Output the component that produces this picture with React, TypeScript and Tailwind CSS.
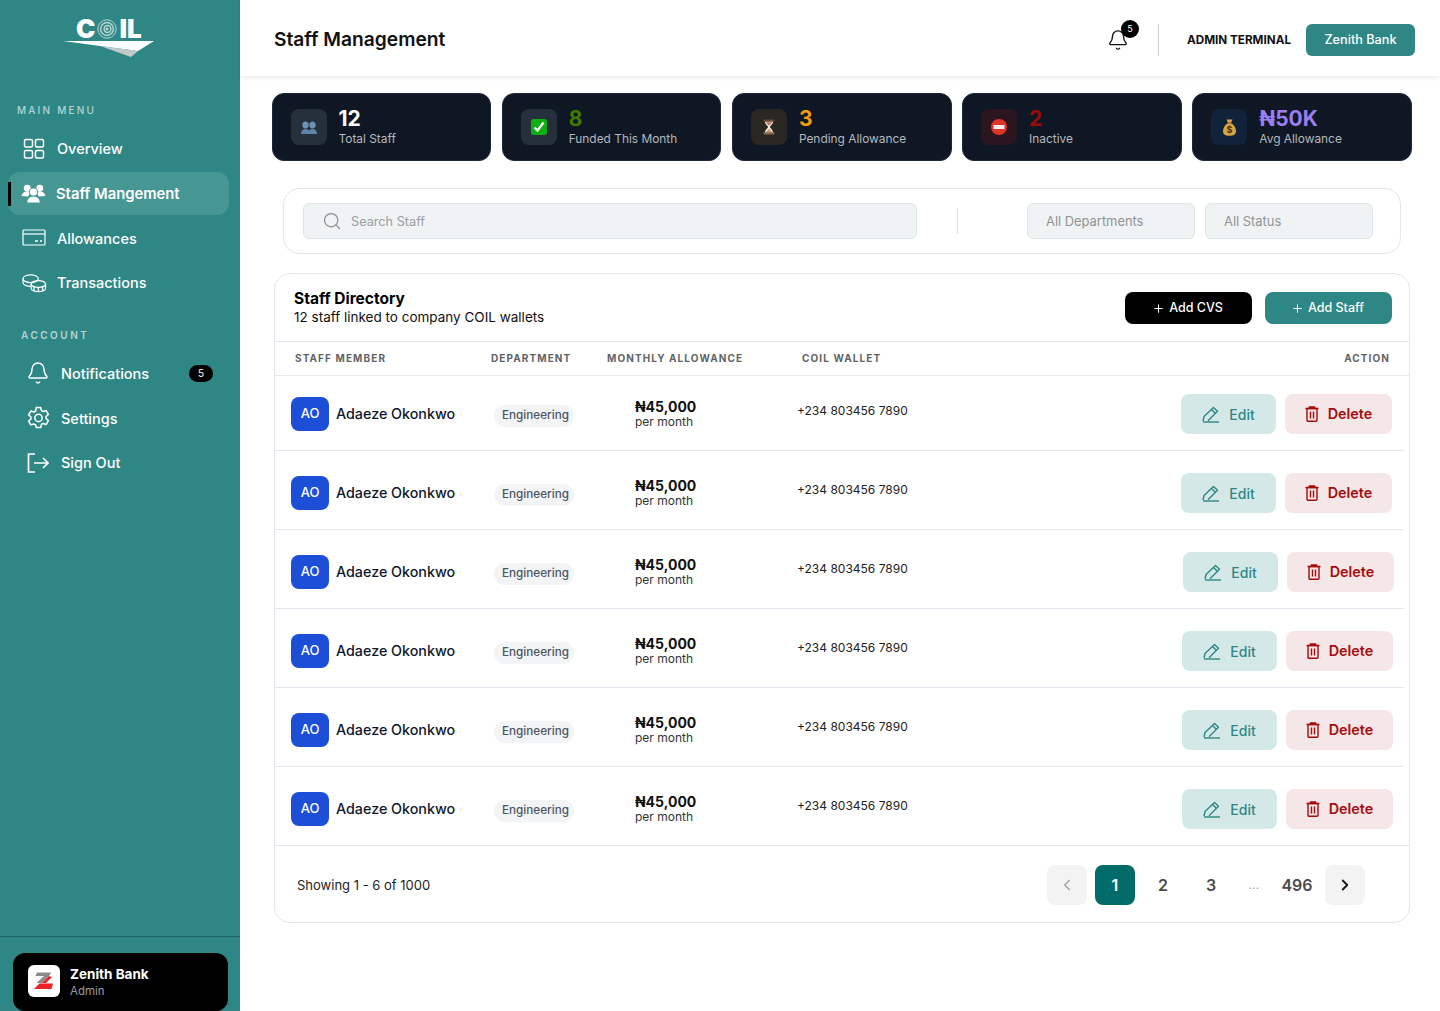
import React from "react";
import { Bell, ChevronLeft, ChevronRight, Plus, Search } from "lucide-react";

const font = { fontFamily: "Inter, 'Liberation Sans', sans-serif" };

const GridIcon = () => (
  <svg width="22" height="22" viewBox="0 0 22 22" fill="none" stroke="white" strokeWidth="1.5">
    <rect x="1.5" y="1.5" width="8" height="7.5" rx="1.5" />
    <rect x="12.5" y="1.5" width="8" height="7.5" rx="1.5" />
    <rect x="1.5" y="12.5" width="8" height="7.5" rx="1.5" />
    <rect x="12.5" y="12.5" width="8" height="7.5" rx="1.5" />
  </svg>
);

const PeopleIcon = () => (
  <svg width="25" height="20" viewBox="0 0 26 20" fill="white">
    <circle cx="6.5" cy="5" r="3.6" />
    <circle cx="19.5" cy="5" r="3.6" />
    <path d="M0.5 13c1-3.5 3-4.5 6-4.500 1.600 0 3 .4 4 1.300-1.600 1-2.600 2.200-3 3.900z" />
    <path d="M25.500 13c-1-3.500-3-4.500-6-4.500-1.600 0-3 .4-4 1.300 1.600 1 2.600 2.200 3 3.900z" />
    <circle cx="13" cy="9" r="4.200" stroke="#469693" strokeWidth="1" />
    <path d="M6.500 20c.4-4.400 2.800-6 6.500-6s6.100 1.600 6.500 6z" />
  </svg>
);

const CardIcon = () => (
  <svg width="24" height="17" viewBox="0 0 24 17" fill="none" stroke="white" strokeWidth="1.2">
    <rect x="1" y="1" width="22" height="15" rx="1" />
    <path d="M1 5h22" />
    <path d="M13 12h3M18 12h2" strokeWidth="1.4" />
  </svg>
);

const CoinsIcon = () => (
  <svg width="25" height="20" viewBox="0 0 26 20" fill="none" stroke="white" strokeWidth="1.3">
    <ellipse cx="9" cy="5.500" rx="8" ry="4" />
    <path d="M1 5.500v4c0 2.200 3.500 4 8 4" />
    <ellipse cx="17" cy="11" rx="7.500" ry="3.500" />
    <path d="M9.500 11v4.500c0 2 3.400 3.500 7.500 3.500s7.500-1.500 7.500-3.500V11M17 14.500V19M12.500 14v4.500M21.500 14v4.500" />
  </svg>
);

const GearIcon = () => (
  <svg width="23" height="23" viewBox="0 0 24 24" fill="none" stroke="white" strokeWidth="1.6" strokeLinejoin="round">
    <path d="M9.700 1.500h4.600l.7 3.200 1.900 1.100 3.100-1 2.300 4-2.400 2.200v2l2.400 2.200-2.300 4-3.100-1-1.900 1.100-.7 3.200H9.700L9 19.800l-1.900-1.100-3.100 1-2.300-4 2.400-2.200v-2L1.700 9.300l2.300-4 3.100 1L9 5.200z" />
    <circle cx="12" cy="12.500" r="3.800" />
  </svg>
);

const SignOutIcon = () => (
  <svg width="22" height="20" viewBox="0 0 22 20" fill="none" stroke="white" strokeWidth="1.7">
    <path d="M8 1H1.500v18H8" />
    <path d="M7 10h14M16 5l5 5-5 5" />
  </svg>
);

const PencilIcon = () => (
  <svg width="18" height="17" viewBox="0 0 18 17" fill="none" stroke="#2e8785" strokeWidth="1.400" strokeLinejoin="round">
    <path d="M1 15l1-4.500L11.500 1.500l4 3.800L6 14.800" />
    <path d="M1 16h16" />
    <path d="M9.500 3.500l4 4" />
  </svg>
);

const TrashIcon = () => (
  <svg width="14" height="16" viewBox="0 0 14 16" fill="none" stroke="#a50c0c" strokeWidth="1.400">
    <path d="M0.500 2.500h13M4.500 2.500V1h5v1.500" />
    <rect x="2" y="2.500" width="10" height="12.700" rx="1" />
    <path d="M5.500 5.500v7M8.500 5.500v7" />
  </svg>
);

const BustsIcon = () => (
  <svg width="16" height="13" viewBox="0 0 16 13" fill="#6e8fb5">
    <path d="M4.500 0.500c2 0 3.200 1.500 3.200 3.500S6.500 7.500 4.500 7.500 1.300 6 1.300 4 2.500 0.500 4.500 0.500z" />
    <path d="M11.500 0.500c2 0 3.200 1.500 3.200 3.500s-1.200 3.500-3.200 3.500S8.300 6 8.300 4s1.200-3.500 3.200-3.500z" />
    <path d="M0 13c0-3 1.500-5 4.500-5 1.500 0 2.700.5 3.500 1.500.8-1 2-1.500 3.500-1.500 3 0 4.500 2 4.500 5z" fill="#5f82ab" />
  </svg>
);

const CheckEmoji = () => (
  <svg width="16" height="16" viewBox="0 0 16 16">
    <rect width="16" height="16" rx="2.500" fill="#0cb012" />
    <path d="M3.500 8.500l3 3 6-8" fill="none" stroke="white" strokeWidth="2.200" />
  </svg>
);

const HourglassEmoji = () => (
  <svg width="12" height="16" viewBox="0 0 12 16">
    <rect x="0.500" y="0.500" width="11" height="2.200" rx="0.800" fill="#6b4a35" />
    <rect x="0.500" y="13.300" width="11" height="2.200" rx="0.800" fill="#8a6a50" />
    <path d="M2 2.700h8c0 3-3 3.800-3 5.300s3 2.300 3 5.300H2c0-3 3-3.800 3-5.300S2 5.700 2 2.700z" fill="#efeae4" />
    <path d="M3 3.200h6c-.4 1.400-2 2-3 3.200-1-1.200-2.600-1.800-3-3.200z" fill="#b9735a" />
    <path d="M3.200 13c.8-1.700 2-2.200 2.800-3.300.800 1.100 2 1.600 2.800 3.300z" fill="#c99a6b" />
  </svg>
);

const NoEntryEmoji = () => (
  <svg width="16" height="16" viewBox="0 0 16 16">
    <circle cx="8" cy="8" r="8" fill="#e0342b" />
    <rect x="2.500" y="6" width="11" height="4" fill="#f3ecec" />
  </svg>
);

const MoneyBagEmoji = () => (
  <svg width="13" height="17" viewBox="0 0 13 17">
    <path d="M3.500 0.500h6L8 4c3 1.500 5 5 5 8 0 3.500-2.500 4.800-6.500 4.800S0 15.500 0 12c0-3 2-6.500 5-8z" fill="#d9a441" />
    <path d="M4.500 4h4" stroke="#7a5520" strokeWidth="1" />
    <text x="6.500" y="14" textAnchor="middle" fontSize="9" fontWeight="700" fill="#4a3210">$</text>
  </svg>
);

const ZenithLogo = () => (
  <svg width="20" height="18" viewBox="0 0 20 18">
    <path d="M3 0.500h14l-1.500 3L8 11H2.500L10 4H1.500z" fill="#8b8b8b" />
    <path d="M9 11.500h10l-1.500 5.500H0l5.500-5.500z" fill="#ed2024" />
    <path d="M15 4l-7 7h4l6-6z" fill="#ed2024" />
  </svg>
);

const Logo = () => (
  <div className="relative h-[76px] w-full">
    <div className="absolute left-[76px] top-[15px] flex items-center">
      <span className="text-[26px] font-black leading-[28px] text-white">C</span>
      <svg width="20" height="22" viewBox="0 0 20 22" fill="none" stroke="#b9d6d5" strokeWidth="1.500" className="mx-[2px]">
        <circle cx="10" cy="11" r="9.200" strokeWidth="1" />
        <circle cx="10" cy="11" r="6.400" />
        <circle cx="10.500" cy="11" r="3.400" />
        <circle cx="10" cy="11" r="0.800" />
      </svg>
      <span className="text-[26px] font-black leading-[28px] text-white">IL</span>
    </div>
    <svg width="92" height="18" viewBox="0 0 92 18" className="absolute left-[63px] top-[40px]">
      <path d="M0 1h91L75 11 37 6z" fill="white" />
      <path d="M37 6l38 5-7 6z" fill="#c3c9cb" />
    </svg>
  </div>
);

type NavItemProps = {
  icon: React.ReactNode;
  label: string;
  active?: boolean;
  badge?: string;
};

const NavItem = ({ icon, label, active, badge }: NavItemProps) => (
  <div className={`relative mb-[1.700px] flex h-[43px] items-center rounded-xl ${active ? "bg-[#469693]" : ""}`}>
    {active && <div className="absolute left-0 top-[10px] h-[24px] w-[3px] bg-black" />}
    <div className={`flex shrink-0 justify-center pl-[3px] ${active ? "w-[48px]" : "w-[49px]"}`}>{icon}</div>
    <span className={`pt-[1px] text-white ${active ? "text-[14.800px] font-semibold" : "text-[14.500px] font-medium"}`}>{label}</span>
    {badge && (
      <span className="ml-auto mr-[16px] flex h-[17px] w-[24px] items-center justify-center rounded-full bg-black text-[10px] text-white">
        {badge}
      </span>
    )}
  </div>
);

const Sidebar = () => (
  <aside className="flex h-full w-[240px] shrink-0 flex-col bg-[#2e8785]">
    <Logo />
    <div className="mt-[28px] pl-[17px] text-[10px] font-medium leading-[12px] tracking-[0.22em] text-[#b5d4d3]">MAIN MENU</div>
    <nav className="mt-[11px] pl-[8px] pr-[11px]">
      <NavItem icon={<GridIcon />} label="Overview" />
      <NavItem icon={<PeopleIcon />} label="Staff Mangement" active />
      <NavItem icon={<CardIcon />} label="Allowances" />
      <NavItem icon={<CoinsIcon />} label="Transactions" />
    </nav>
    <div className="mt-[23px] pl-[21px] text-[10px] font-semibold leading-[12px] tracking-[0.25em] text-[#b5d4d3]">ACCOUNT</div>
    <nav className="mt-[11px] pl-[12px] pr-[11px]">
      <NavItem icon={<Bell size={24} color="white" strokeWidth={1.4} />} label="Notifications" badge="5" />
      <NavItem icon={<GearIcon />} label="Settings" />
      <NavItem icon={<SignOutIcon />} label="Sign Out" />
    </nav>
    <div className="mt-auto border-t border-[#1f5f5d] pl-[13px] pr-[12px] pt-[16px]">
      <div className="flex h-[58px] items-center gap-[10px] rounded-xl bg-black pl-[15px]">
        <div className="-mt-[2px] flex h-[32px] w-[32px] items-center justify-center rounded-md bg-white">
          <ZenithLogo />
        </div>
        <div>
          <div className="text-[13.500px] font-bold leading-[18px] text-white">Zenith Bank</div>
          <div className="mt-[1px] text-[11.500px] leading-[15px] text-[#9a9a9a]">Admin</div>
        </div>
      </div>
    </div>
  </aside>
);

const Header = () => (
  <header className="flex h-[76px] shrink-0 items-center bg-white pl-[34px] pr-[25px] pt-[4px] shadow-[0_2px_4px_rgba(0,0,0,0.08)]">
    <h1 className="-mt-[2px] text-[19.200px] font-semibold text-[#111]">Staff Management</h1>
    <div className="relative ml-auto">
      <Bell size={22} color="#111" strokeWidth={1.5} />
      <span className="absolute -right-[10px] -top-[9px] flex h-[18px] w-[18px] items-center justify-center rounded-full bg-black text-[9px] text-white">
        5
      </span>
    </div>
    <div className="ml-[29px] h-[32px] w-px bg-[#d4d4d4]" />
    <div className="ml-[28px] mt-[2px] text-[11.700px] font-bold text-[#111]">ADMIN TERMINAL</div>
    <div className="ml-[15px] flex h-[32px] w-[109px] items-center justify-center rounded-md bg-[#2e8785] text-[12.700px] font-medium text-white">
      Zenith Bank
    </div>
  </header>
);

type StatProps = {
  icon: React.ReactNode;
  iconBg: string;
  value: string;
  valueColor: string;
  label: string;
};

const StatCard = ({ icon, iconBg, value, valueColor, label }: StatProps) => (
  <div className="flex h-[68px] items-center rounded-xl border border-[#1e2a3a] bg-[#0f1724] pl-[18px]">
    <div className={`flex h-[36px] w-[36px] items-center justify-center rounded-lg ${iconBg}`}>{icon}</div>
    <div className="ml-[12px]">
      <div className={`text-[21px] font-bold leading-[24px] ${valueColor}`}>{value}</div>
      <div className="-mt-[1px] text-[11.900px] leading-[17px] text-[#b4b8bf]">{label}</div>
    </div>
  </div>
);

const Stats = () => (
  <div className="grid grid-cols-5 gap-[10.500px] pl-[31.500px] pr-[28px] pt-[17px]">
    <StatCard icon={<BustsIcon />} iconBg="bg-[#262f3c]" value="12" valueColor="text-white" label="Total Staff" />
    <StatCard icon={<CheckEmoji />} iconBg="bg-[#262f3c]" value="8" valueColor="text-[#3f7a00]" label="Funded This Month" />
    <StatCard icon={<HourglassEmoji />} iconBg="bg-[#2a2722]" value="3" valueColor="text-[#f59e0b]" label="Pending Allowance" />
    <StatCard icon={<NoEntryEmoji />} iconBg="bg-[#2d1520]" value="2" valueColor="text-[#9b0b0b]" label="Inactive" />
    <StatCard icon={<MoneyBagEmoji />} iconBg="bg-[#10233a]" value="₦50K" valueColor="text-[#9a7df0]" label="Avg Allowance" />
  </div>
);

const Filters = () => (
  <div className="ml-[43px] mr-[39px] mt-[27px] flex h-[66px] items-center rounded-2xl border border-[#dfe9e9] pl-[19px]">
    <div className="flex h-[36px] w-[614px] items-center rounded-md border border-[#dbe6e6] bg-[#eff3f4] pl-[18px]">
      <Search size={20} color="#8a8f93" strokeWidth={1.5} />
      <span className="ml-[9px] mt-[1px] text-[12.700px] text-[#9a9ea2]">Search Staff</span>
    </div>
    <div className="ml-[40px] h-[26px] w-px bg-[#dfe6e6]" />
    <div className="ml-[69px] flex h-[36px] w-[168px] items-center rounded-md border border-[#dbe6e6] bg-[#eff3f4] pl-[18px] pt-[1px] text-[12.900px] text-[#8f9497]">
      All Departments
    </div>
    <div className="ml-[10px] flex h-[36px] w-[168px] items-center rounded-md border border-[#dbe6e6] bg-[#eff3f4] pl-[18px] pt-[1px] text-[12.900px] text-[#8f9497]">
      All Status
    </div>
  </div>
);

// first row is shorter, the rest carry a little extra room on top, as in the design
const Row = ({ index }: { index: number }) => {
  const actionsMargin = ["mr-[12px]", "mr-[12px]", "mr-[10px]", "mr-[11px]", "mr-[11px]", "mr-[16px]"][index];
  return (
    <div
      className={`flex items-center border-b border-[#e2e6ef] pl-[16px] ${index === 0 ? "h-[75px] pt-[2px]" : "h-[79px] pt-[6px]"} ${index === 5 ? "" : "mr-[5px]"}`}
    >
      <div className="-mt-[1px] flex w-[203px] shrink-0 items-center">
        <div className="flex h-[34px] w-[38px] items-center justify-center rounded-lg bg-[#1d4ed8] text-[13px] font-medium text-white">AO</div>
        <span className="ml-[7px] text-[14.300px] font-medium text-[#0f172a]">Adaeze Okonkwo</span>
      </div>
      <div className="w-[141px] shrink-0">
        <span className="inline-flex h-[22px] w-[80px] items-center justify-center rounded-full bg-[#f3f4f6] pl-[3px] text-[11.700px] font-medium text-[#4b5563]">
          Engineering
        </span>
      </div>
      <div className="w-[162px] shrink-0">
        <div className="text-[14px] font-bold leading-[16px] text-[#111]">₦45,000</div>
        <div className="text-[12px] leading-[14px] text-[#333]">per month</div>
      </div>
      <div className="-mt-[6px] text-[12px] text-[#222]">+234 803456 7890</div>
      <div className={`ml-auto flex gap-[9px] ${actionsMargin}`}>
        <div className="flex h-[40px] w-[95px] items-center justify-center gap-[9px] rounded-lg bg-[#d5e8e8] text-[14px] font-medium text-[#2e8785]">
          <PencilIcon />
          Edit
        </div>
        <div className="flex h-[40px] w-[107px] items-center justify-center gap-[9px] rounded-lg bg-[#f5e6e7] text-[14.400px] font-semibold text-[#a50c0c]">
          <TrashIcon />
          Delete
        </div>
      </div>
    </div>
  );
};

const Directory = () => (
  <section className="ml-[34px] mr-[30px] mt-[19px] h-[650px] rounded-2xl border border-[#e2e6ef]">
    <div className="flex h-[67px] items-center pl-[19px] pr-[17px] pt-[1px]">
      <div>
        <h2 className="text-[15.500px] font-bold leading-[18px] text-black">Staff Directory</h2>
        <p className="text-[13.500px] leading-[18px] text-[#111]">12 staff linked to company COIL wallets</p>
      </div>
      <div className="ml-auto flex gap-[13px]">
        <div className="flex h-[32px] w-[127px] items-center justify-center gap-[4px] rounded-lg bg-black pr-[2px] text-[12.500px] font-medium text-white">
          <Plus size={13} />
          Add CVS
        </div>
        <div className="flex h-[32px] w-[127px] items-center justify-center gap-[4px] rounded-lg bg-[#2e8785] pr-[2px] text-[12.500px] font-medium text-white">
          <Plus size={13} />
          Add Staff
        </div>
      </div>
    </div>
    <div className="flex h-[35px] items-center border-y border-[#e6eaf0] pl-[20px] pr-[19px] text-[10px] font-bold tracking-[0.11em] text-[#5f6368]">
      <div className="w-[196px]">STAFF MEMBER</div>
      <div className="w-[116px]">DEPARTMENT</div>
      <div className="w-[195px]">MONTHLY ALLOWANCE</div>
      <div>COIL WALLET</div>
      <div className="ml-auto">ACTION</div>
    </div>
    {[0, 1, 2, 3, 4, 5].map((i) => (
      <Row key={i} index={i} />
    ))}
    <div className="flex h-[76px] items-center pl-[22px] pt-[2px]">
      <span className="mt-[1px] text-[13px] text-[#222]">Showing 1 - 6 of 1000</span>
      <div className="ml-auto mr-[44px] flex items-center text-[16px] font-semibold text-[#4b4b4f]">
        <div className="flex h-[40px] w-[40px] items-center justify-center rounded-lg bg-[#f4f3f4]">
          <ChevronLeft size={18} color="#a3a3a6" />
        </div>
        <div className="ml-[8px] flex h-[40px] w-[40px] items-center justify-center rounded-lg bg-[#006b68] text-white">1</div>
        <div className="ml-[8px] flex h-[40px] w-[40px] items-center justify-center">2</div>
        <div className="ml-[8px] flex h-[40px] w-[40px] items-center justify-center">3</div>
        <div className="ml-[8px] flex h-[40px] w-[30px] items-center justify-center text-[12px] font-normal text-[#a3a3a6]">...</div>
        <div className="ml-[3px] flex h-[40px] w-[50px] items-center justify-center">496</div>
        <div className="ml-[3px] flex h-[40px] w-[40px] items-center justify-center rounded-lg bg-[#f4f3f4]">
          <ChevronRight size={18} color="#18181b" strokeWidth={2.5} />
        </div>
      </div>
    </div>
  </section>
);

export default function App() {
  return (
    <div className="flex h-[1011px] w-full overflow-hidden bg-white" style={font}>
      <Sidebar />
      <main className="min-w-0 flex-1">
        <Header />
        <Stats />
        <Filters />
        <Directory />
      </main>
    </div>
  );
}
